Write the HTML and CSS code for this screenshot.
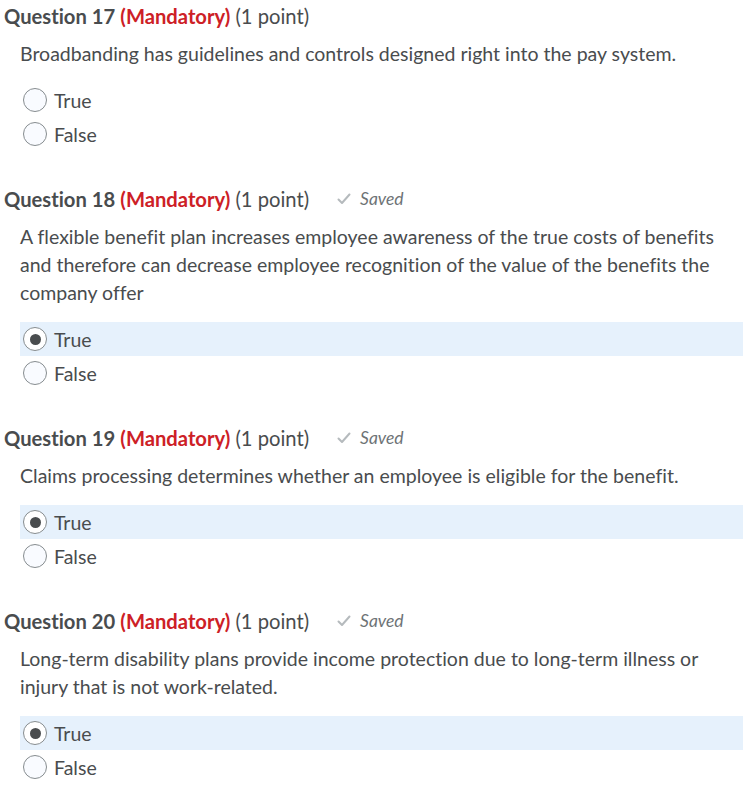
FILE: index.html
```html
<!DOCTYPE html>
<html>
<head>
<meta charset="utf-8">
<link rel="stylesheet" href="styles.css">
</head>
<body>
<div class="quiz">
  <section class="question">
    <h2 class="qhead"><span class="qnum">Question 17</span> <span class="mand">(Mandatory)</span> <span class="pts">(1 point)</span></h2>
    <p class="qtext">Broadbanding has guidelines and controls designed right into the pay system.</p>
    <ul class="opts">
      <li class="opt"><span class="radio"></span><span>True</span></li>
      <li class="opt"><span class="radio"></span><span>False</span></li>
    </ul>
  </section>
  <section class="question">
    <h2 class="qhead"><span class="qnum">Question 18</span> <span class="mand">(Mandatory)</span> <span class="pts">(1 point)</span><span class="saved"><svg class="check" viewBox="0 0 14 12" width="14" height="12"><path d="M1.5 6.5 L5 10 L12.5 1.5" fill="none" stroke="#b5babd" stroke-width="2" stroke-linecap="round" stroke-linejoin="round"/></svg><em>Saved</em></span></h2>
    <p class="qtext">A flexible benefit plan increases employee awareness of the true costs of benefits and therefore can decrease employee recognition of the value of the benefits the company offer</p>
    <ul class="opts">
      <li class="opt selected"><span class="radio checked"></span><span>True</span></li>
      <li class="opt"><span class="radio"></span><span>False</span></li>
    </ul>
  </section>
  <section class="question">
    <h2 class="qhead"><span class="qnum">Question 19</span> <span class="mand">(Mandatory)</span> <span class="pts">(1 point)</span><span class="saved"><svg class="check" viewBox="0 0 14 12" width="14" height="12"><path d="M1.5 6.5 L5 10 L12.5 1.5" fill="none" stroke="#b5babd" stroke-width="2" stroke-linecap="round" stroke-linejoin="round"/></svg><em>Saved</em></span></h2>
    <p class="qtext">Claims processing determines whether an employee is eligible for the benefit.</p>
    <ul class="opts">
      <li class="opt selected"><span class="radio checked"></span><span>True</span></li>
      <li class="opt"><span class="radio"></span><span>False</span></li>
    </ul>
  </section>
  <section class="question">
    <h2 class="qhead"><span class="qnum">Question 20</span> <span class="mand">(Mandatory)</span> <span class="pts">(1 point)</span><span class="saved"><svg class="check" viewBox="0 0 14 12" width="14" height="12"><path d="M1.5 6.5 L5 10 L12.5 1.5" fill="none" stroke="#b5babd" stroke-width="2" stroke-linecap="round" stroke-linejoin="round"/></svg><em>Saved</em></span></h2>
    <p class="qtext">Long-term disability plans provide income protection due to long-term illness or injury that is not work-related.</p>
    <ul class="opts">
      <li class="opt selected"><span class="radio checked"></span><span>True</span></li>
      <li class="opt"><span class="radio"></span><span>False</span></li>
    </ul>
  </section>
</div>
</body>
</html>
```
FILE: styles.css
```css
html, body {
  margin: 0;
  padding: 0;
  background: #ffffff;
}
body {
  font-family: Lato, "Noto Sans", sans-serif;
  color: #494c4e;
  font-variant-ligatures: none;
}
.quiz {
  padding: 4px 5px 0 4px;
}
.question {
  margin-bottom: 36px;
}
.qhead {
  margin: 0;
  font-size: 20.2px;
  line-height: 24px;
  font-weight: 400;
  white-space: nowrap;
}
.qnum {
  font-weight: 700;
  color: #494c4e;
}
.mand {
  font-weight: 700;
  color: #cd2026;
}
.pts {
  font-weight: 400;
}
.saved {
  display: inline-flex;
  align-items: center;
  vertical-align: top;
  height: 24px;
  margin-left: 28px;
  font-size: 17.5px;
  color: #6e7376;
}
.saved em {
  margin-left: 9px;
}
.check {
  display: block;
}
.qtext {
  margin: 12px 0 0 16px;
  font-size: 19.5px;
  line-height: 28px;
}
.opts {
  list-style: none;
  margin: 15px 0 0 16px;
  padding: 0;
}
.opt {
  display: flex;
  align-items: center;
  height: 34px;
  font-size: 19.5px;
  padding-left: 3px;
}
.opt.selected {
  background: #e6f1fc;
}
.radio {
  box-sizing: border-box;
  width: 24px;
  height: 24px;
  border: 1px solid #868c8f;
  border-radius: 50%;
  background: #f9fbff;
  margin-right: 7px;
  display: flex;
  align-items: center;
  justify-content: center;
}
.radio.checked {
  background: #ffffff;
}
.radio.checked::after {
  content: "";
  width: 11px;
  height: 11px;
  border-radius: 50%;
  background: #494c4e;
}
```
